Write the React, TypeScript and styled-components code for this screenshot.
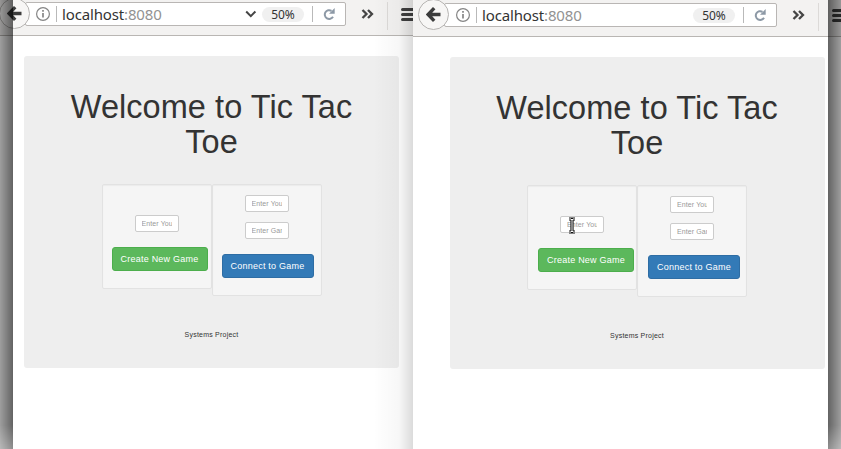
import React from "react";
import styled, { createGlobalStyle } from "styled-components";

const GlobalStyle = createGlobalStyle`
  * { box-sizing: border-box; }
  html, body { margin: 0; padding: 0; overflow: hidden; background: #fff; }
`;

const Desktop = styled.main`
  position: relative;
  display: flex;
  width: 841px;
  height: 449px;
  overflow: hidden;
  font-family: "Liberation Sans", Arial, sans-serif;
`;

const BrowserWindow = styled.section<{ $front: boolean }>`
  position: relative;
  flex: 0 0 ${(p) => (p.$front ? 428 : 413)}px;
  height: 449px;
  overflow: hidden;
  background: #fff;
`;

const Toolbar = styled.header<{ $front: boolean }>`
  display: flex;
  align-items: flex-start;
  height: ${(p) => (p.$front ? 37 : 36)}px;
  padding-top: ${(p) => (p.$front ? 3 : 2)}px;
  padding-left: ${(p) => (p.$front ? 6 : 0)}px;
  background: #f3f2f1;
  border-bottom: 1px solid #b9b6b3;
`;

const BackButton = styled.button`
  position: relative;
  z-index: 1;
  display: grid;
  place-items: center;
  flex: none;
  width: 31px;
  height: 31px;
  margin: -4px 0 0 -1px;
  padding: 0;
  border: 1px solid #b6b4b2;
  border-radius: 50%;
  background: #f7f6f5;
`;

const AddressBar = styled.div<{ $front: boolean }>`
  display: flex;
  align-items: center;
  flex: none;
  width: ${(p) => (p.$front ? 333 : 321)}px;
  height: 24px;
  margin-left: -5px;
  padding-left: ${(p) => (p.$front ? 11 : 10)}px;
  border: 1px solid #b9b6b4;
  border-radius: 2px;
  background: #fff;
`;

const Divider = styled.span`
  flex: none;
  width: 1px;
  height: 16px;
  background: #b9b9b9;
`;

const Address = styled.span`
  flex: 1;
  margin-left: 5px;
  color: #333;
  font: 15px/20px "Noto Sans", sans-serif;
  letter-spacing: -0.15px;
  white-space: nowrap;
`;

const Port = styled.span`
  color: #929292;
`;

const ZoomLevel = styled.span`
  flex: none;
  width: 42px;
  height: 15px;
  margin: 0 8px 0 5px;
  border-radius: 8px;
  background: #f0f0f0;
  color: #333;
  font: 12px/15px "Noto Sans", sans-serif;
  letter-spacing: -0.1px;
  text-align: center;
`;

const ReloadSlot = styled.span`
  display: flex;
  flex: none;
  width: 32px;
  padding-left: 10px;
`;

const Overflow = styled.span`
  display: flex;
  flex: none;
  width: 41px;
  padding: 6px 0 0 15px;
`;

const MenuArea = styled.span`
  display: flex;
  flex: none;
  height: 28px;
  padding: 5px 0 0 13px;
  border-left: 1px solid #dcdad8;
`;

const Jumbotron = styled.div<{ $front: boolean }>`
  display: flex;
  flex-direction: column;
  align-items: center;
  width: 375px;
  height: 312px;
  margin: 20px 0 0 ${(p) => (p.$front ? 37 : 24)}px;
  padding-top: 34px;
  padding-right: ${(p) => (p.$front ? 1 : 0)}px;
  border-radius: 3px;
  background: #eee;
`;

const Title = styled.h1`
  width: 320px;
  margin: 0 0 24px;
  color: #333;
  font-size: 32.5px;
  font-weight: 400;
  line-height: 35px;
  letter-spacing: 0.05px;
  text-align: center;
`;

const Panels = styled.div`
  display: flex;
  align-items: flex-start;
  height: 112px;
`;

const Panel = styled.form<{ $tall?: boolean }>`
  display: flex;
  flex-direction: column;
  width: 110px;
  height: ${(p) => (p.$tall ? 112 : 105)}px;
  padding-top: ${(p) => (p.$tall ? 10 : 30)}px;
  border: 1px solid #e2e2e2;
  border-radius: 2px;
  background: #f5f5f5;
  box-shadow: inset 0 1px 1px rgba(0, 0, 0, 0.04);
`;

const Field = styled.input`
  flex: none;
  width: 44px;
  height: 17px;
  margin: 0 0 10px 32px;
  padding: 0 6px;
  border: 1px solid #ccc;
  border-radius: 2px;
  background: #fff;
  font: 7px/15px "Liberation Sans", Arial, sans-serif;
  letter-spacing: 0.1px;
  &::placeholder { color: #999; opacity: 1; }
`;

const Submit = styled.button<{ $primary?: boolean; $shift: number }>`
  flex: none;
  width: ${(p) => (p.$primary ? 92 : 96)}px;
  height: 24px;
  margin: 5px 0 0 ${(p) => 9 + p.$shift}px;
  padding: 0;
  border: 1px solid ${(p) => (p.$primary ? "#2e6da4" : "#4cae4c")};
  border-radius: 3px;
  background: ${(p) => (p.$primary ? "#337ab7" : "#5cb85c")};
  color: #fff;
  font: 9px/22px "Liberation Sans", Arial, sans-serif;
  letter-spacing: 0.22px;
  white-space: nowrap;
`;

const Credit = styled.p`
  margin: 34px 0 0;
  color: #333;
  font-size: 7px;
  line-height: 10px;
  letter-spacing: 0.22px;
`;

const EdgeShade = styled.div<{ $right?: boolean }>`
  position: absolute;
  z-index: 3;
  top: 0;
  ${(p) => (p.$right ? "right: 0;" : "left: 0;")}
  width: 13px;
  height: 449px;
  background: linear-gradient(
    ${(p) => (p.$right ? "to left" : "to right")},
    rgba(0, 0, 0, 0.38),
    rgba(0, 0, 0, 0.61)
  );
  mask-image: linear-gradient(to bottom, #000 425px, rgba(0, 0, 0, 0.72) 449px);
`;

const WindowShadow = styled.div`
  position: absolute;
  z-index: 2;
  top: 0;
  left: 373px;
  width: 40px;
  height: 449px;
  background: linear-gradient(to right, transparent, rgba(0, 0, 0, 0.03) 65%, rgba(0, 0, 0, 0.14));
`;

const TextCursor = styled.svg`
  position: absolute;
  top: 217px;
  left: 155px;
`;

const BackArrow = () => (
  <svg width="15" height="15" viewBox="0 0 15 15" fill="none" stroke="#3c3c3c" strokeWidth="3.4">
    <path d="M8.2 1.2 2.2 7.5l6 6.3M2.5 7.5H14.5" />
  </svg>
);

const InfoIcon = () => (
  <svg width="20" height="16" viewBox="0 0 20 16" fill="none" stroke="#858585">
    <circle cx="7" cy="8" r="6.4" strokeWidth="1.2" />
    <path d="M7 7v4.5M7 4v1.7" strokeWidth="1.7" />
  </svg>
);

const Chevron = () => (
  <svg width="12" height="8" viewBox="0 0 12 8" fill="none" stroke="#444" strokeWidth="2">
    <path d="m1.2 1.5 4.6 4.6 4.6-4.6" />
  </svg>
);

const ReloadIcon = () => (
  <svg width="12" height="12" viewBox="0 0 12 12" fill="none" stroke="#8d99a6" strokeWidth="2">
    <path d="M8.5 2.8A4.4 4.4 0 1 0 10 8.8" />
    <path d="M11.7 0v5.7H6z" fill="#8d99a6" stroke="none" />
  </svg>
);

const MoreIcon = () => (
  <svg width="13" height="12" viewBox="0 0 13 12" fill="none" stroke="#454545" strokeWidth="2.3">
    <path d="m1.5 2 4 4-4 4M7 2l4 4-4 4" />
  </svg>
);

const MenuIcon = () => (
  <svg width="16" height="16" viewBox="0 0 16 16" stroke="#404040" strokeWidth="3" strokeLinecap="round">
    <path d="M1.5 2.5h13M1.5 7.5h13M1.5 12.5h13" />
  </svg>
);

const Cursor = () => (
  <TextCursor width="8" height="17" viewBox="0 0 8 17" fill="none">
    <path d="M1 2h2l1 1 1-1h2M4 3v11M1 15h2l1-1 1 1h2" stroke="#111" strokeWidth="3.2" />
    <path d="M1 2h2l1 1 1-1h2M4 3v11M1 15h2l1-1 1 1h2" stroke="#fff" strokeWidth="1" />
  </TextCursor>
);

function GameBrowser({ front = false }: { front?: boolean }) {
  const shift = front ? 1 : 0;
  return (
    <BrowserWindow $front={front}>
      <Toolbar $front={front}>
        <BackButton aria-label="Back"><BackArrow /></BackButton>
        <AddressBar $front={front}>
          <InfoIcon />
          <Divider />
          <Address>localhost<Port>:8080</Port></Address>
          {!front && <Chevron />}
          <ZoomLevel>50%</ZoomLevel>
          <Divider />
          <ReloadSlot><ReloadIcon /></ReloadSlot>
        </AddressBar>
        <Overflow><MoreIcon /></Overflow>
        <MenuArea><MenuIcon /></MenuArea>
      </Toolbar>
      <Jumbotron $front={front}>
        <Title>Welcome to Tic Tac Toe</Title>
        <Panels>
          <Panel>
            <Field placeholder="Enter Your Name" />
            <Submit type="button" $shift={shift}>Create New Game</Submit>
          </Panel>
          <Panel $tall>
            <Field placeholder="Enter Your Name" />
            <Field placeholder="Enter Game ID" />
            <Submit type="button" $primary $shift={shift}>Connect to Game</Submit>
          </Panel>
        </Panels>
        <Credit>Systems Project</Credit>
      </Jumbotron>
      {front ? <Cursor /> : <WindowShadow />}
      <EdgeShade $right={front} />
    </BrowserWindow>
  );
}

export default function App() {
  return (
    <>
      <GlobalStyle />
      <Desktop>
        <GameBrowser />
        <GameBrowser front />
      </Desktop>
    </>
  );
}
